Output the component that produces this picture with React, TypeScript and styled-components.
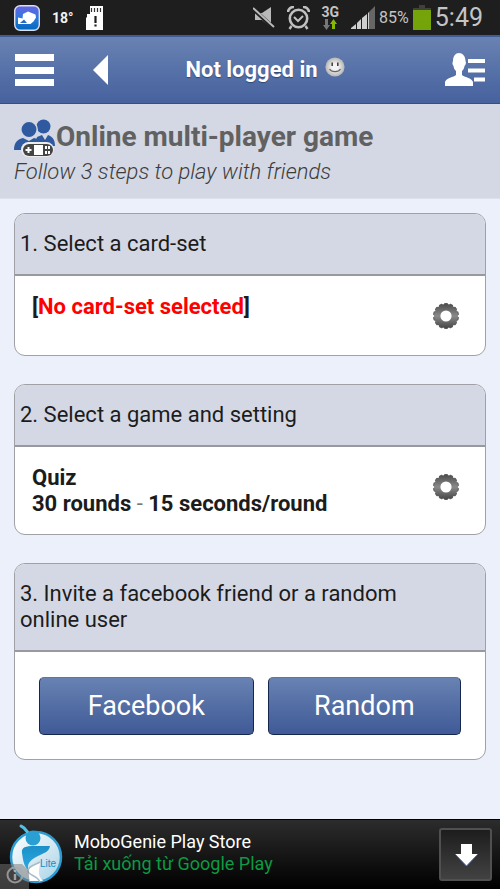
import React from "react";
import styled, { createGlobalStyle } from "styled-components";

const GlobalStyle = createGlobalStyle`
  * { box-sizing: border-box; }
  body {
    margin: 0;
    background: #ebf0fa;
    color: #1c1c1c;
    font-family: Roboto, "Noto Sans", sans-serif;
  }
  h1, h2, p { margin: 0; }
  button { font-family: inherit; cursor: pointer; }
  svg { display: block; flex: none; }
`;

const Page = styled.div`
  display: flex;
  flex-direction: column;
  min-height: 100vh;
`;

const StatusBar = styled.div`
  display: flex;
  align-items: center;
  justify-content: space-between;
  height: 35px;
  padding: 0 17px 0 14px;
  background: #1e1e1e;
  color: #c4c4c4;
`;

const StatusGroup = styled.div<{ $gap: number }>`
  display: flex;
  align-items: center;
  gap: ${(p) => p.$gap}px;
`;

const Temperature = styled.span`
  color: #f2f2f2;
  font: bold 14px/24px "Liberation Sans Narrow", Roboto, sans-serif;
`;

const Percent = styled.span`
  font-size: 16px;
  line-height: 24px;
`;

const Clock = styled.span`
  font-size: 25px;
  line-height: 34px;
`;

const Network = styled.span`
  display: flex;
  flex-direction: column;
  align-items: center;
  font-size: 14px;
  font-weight: bold;
  line-height: 14px;
`;

const Header = styled.header`
  display: grid;
  grid-template-columns: 76px 34px 1fr 80px;
  align-items: center;
  height: 69px;
  padding: 0 15px;
  border-top: 2px solid #405c96;
  border-bottom: 1px solid #304f8b;
  background: linear-gradient(#6882b3, #46619d);
`;

const IconButton = styled.button`
  display: flex;
  align-items: center;
  padding: 0;
  border: 0;
  background: none;
`;

const AccountButton = styled(IconButton)`
  justify-self: end;
`;

const Account = styled.div`
  display: flex;
  align-items: center;
  justify-content: center;
  gap: 7px;
  color: #fff;
  font-size: 22px;
  font-weight: bold;
  line-height: 28px;
  white-space: nowrap;
  text-shadow: 0 1px 1px #2e4878;
`;

const Raised = styled.span`
  padding-bottom: 6px;
`;

const TitleStrip = styled.section`
  padding: 15px 14px 11px;
  border-bottom: 1px solid #dde1ec;
  background: #d4d8e4;
  color: #616161;
`;

const TitleRow = styled.div`
  display: flex;
  align-items: center;
`;

const Title = styled.h1`
  font-size: 28px;
  line-height: 36px;
  padding-bottom: 2px;
`;

const Subtitle = styled.p`
  font-size: 22px;
  font-style: italic;
  font-weight: 300;
  line-height: 30px;
  color: #3c3c3c;
`;

const Steps = styled.main`
  display: flex;
  flex-direction: column;
  gap: 28px;
  padding: 14px 14px 28px;
`;

const Card = styled.section`
  overflow: hidden;
  border: 1px solid #a0a1a5;
  border-radius: 11px;
  background: #fff;
`;

const CardHeading = styled.h2`
  padding: 17px 32px 17px 5px;
  border-bottom: 2px solid #98999e;
  background: #d4d8e4;
  font-size: 22px;
  font-weight: 400;
  line-height: 26px;
`;

const CardBody = styled.div`
  display: flex;
  justify-content: space-between;
  min-height: 79px;
  padding: 18px 25px 17px 17px;
  font-size: 22px;
  line-height: 26px;
`;

const Warning = styled.span`
  color: #f00;
`;

const Dash = styled.span`
  font-weight: 400;
  color: #777;
`;

const SettingsButton = styled(IconButton)`
  align-self: flex-start;
  padding-top: 8px;
`;

const Actions = styled.div`
  display: flex;
  gap: 14px;
  padding: 25px 24px 24px;
`;

const ActionButton = styled.button<{ $grow: number }>`
  flex: ${(p) => p.$grow} 1 0;
  min-width: 0;
  height: 58px;
  padding: 0;
  border: 1px solid #15264f;
  border-top-color: #6d7480;
  border-radius: 5px;
  background: linear-gradient(#6882b3, #3f5a97);
  color: #fff;
  font-size: 27px;
  line-height: 32px;
`;

const Ad = styled.aside`
  display: flex;
  align-items: center;
  justify-content: space-between;
  height: 70px;
  margin-top: auto;
  padding-right: 8px;
  border-top: 1px solid #000;
  background: linear-gradient(#2c2c2c, #000);
`;

const AdContent = styled.div`
  display: flex;
  align-items: center;
  gap: 6px;
`;

const AdName = styled.p`
  color: #fff;
  font-size: 18px;
  line-height: 22px;
`;

const AdLink = styled.a`
  color: #0c9a43;
  font-size: 18px;
  line-height: 22px;
  text-decoration: none;
`;

const AdText = styled.div`
  padding-bottom: 4px;
`;

const DownloadButton = styled.button`
  display: flex;
  align-items: center;
  justify-content: center;
  width: 53px;
  height: 53px;
  padding: 0;
  border: 2px solid #505050;
  border-radius: 3px;
  background: linear-gradient(#1d1d1d, #424242);
`;

const WeatherIcon = () => (
  <svg width="26" height="26" viewBox="0 0 26 26">
    <defs>
      <linearGradient id="tile" x2="0" y2="1">
        <stop stopColor="#6b62e6" />
        <stop offset=".5" stopColor="#2a79dc" />
        <stop offset="1" stopColor="#0068bd" />
      </linearGradient>
    </defs>
    <rect x=".7" y=".7" width="24.6" height="24.6" rx="5.5" fill="url(#tile)" stroke="#dcdff0" strokeWidth="1.4" />
    <path d="M9 9l5-2.500 7.500 3 .5 3-2.500 4-3 2.500H4v-6.500l4.500 1z" fill="#fff" />
    <path d="M6 18l4-3.500 3 3.500z" fill="#226fc5" />
  </svg>
);

const SdCardIcon = () => (
  <svg width="17" height="24" viewBox="0 0 17 24">
    <path d="M4 0h13v24H0V12l1-1V8h3z" fill="#fff" />
    <path d="M5.5 2v4M8.5 2v4M11.5 2v4M14.5 2v4" stroke="#333" strokeWidth="1.2" />
    <path d="M9.5 10v7M9.5 18.5v2" stroke="#1e1e1e" strokeWidth="2.2" />
  </svg>
);

const MuteIcon = () => (
  <svg width="22" height="22" viewBox="0 0 22 22">
    <path d="M2 6h7l9-6v20l-9-7H2z" fill="#b9b9b9" />
    <path d="M0 2l21 19" stroke="#1e1e1e" strokeWidth="4" />
    <path d="M0 1l21 19" stroke="#b9b9b9" strokeWidth="2" />
  </svg>
);

const AlarmIcon = () => (
  <svg width="23" height="24" viewBox="0 0 23 24" fill="none" stroke="#c0c0c0">
    <circle cx="11.5" cy="12.5" r="8.7" strokeWidth="2.6" />
    <path d="M1 6a5.500 5.500 0 0 1 6-5M22 6a5.500 5.500 0 0 0-6-5" strokeWidth="2.6" />
    <path d="M4.500 20l-2 3M18.500 20l2 3" strokeWidth="2.4" />
    <path d="M7 11l4 4 5-5" strokeWidth="2" />
  </svg>
);

const TransferIcon = () => (
  <svg width="14" height="11" viewBox="0 0 14 11">
    <path d="M2 0h3v6h2l-3.500 5L0 6h2z" fill="#777" />
    <path d="M10.500 0L14 5h-2v5H9V5H7z" fill="#86ba00" />
  </svg>
);

const SignalIcon = () => (
  <svg width="24" height="23" viewBox="0 0 24 23">
    <path d="M0 23v-1l5-4v5zM6 23v-6l4-4v10zM11 23V12l5-4v15z" fill="#cfcfcf" />
    <path d="M17 23V7l1-1v17z" fill="#cfcfcf" />
    <path d="M18 23V6l6-6v23z" fill="#666" />
  </svg>
);

const BatteryIcon = () => (
  <svg width="18" height="25" viewBox="0 0 18 25">
    <path d="M6 0h6v3h6v22H0V3h6z" fill="#3e4238" />
    <path d="M0 5h18v20H0z" fill="#74a30a" />
  </svg>
);

const MenuIcon = () => (
  <svg width="40" height="34" viewBox="0 0 40 34">
    <path d="M0 1h39v7H0zM0 14h39v7H0zM0 26h39v7H0z" fill="#fff" />
  </svg>
);

const BackIcon = () => (
  <svg width="20" height="30" viewBox="0 0 20 30">
    <path d="M17 0v30L2 15z" fill="#fff" />
  </svg>
);

const SmileIcon = () => (
  <svg width="20" height="20" viewBox="0 0 20 20">
    <defs>
      <radialGradient id="face">
        <stop offset=".3" stopColor="#f4f4f4" />
        <stop offset="1" stopColor="#b5b5b5" />
      </radialGradient>
    </defs>
    <circle cx="10" cy="10" r="9.6" fill="url(#face)" />
    <path d="M7.200 5.500v3.500M12.800 5.500v3.500" stroke="#444" strokeWidth="1.6" />
    <path d="M4.500 12c2 3.500 9 3.500 11 0" fill="none" stroke="#666" strokeWidth="1.200" />
  </svg>
);

const ContactIcon = () => (
  <svg width="40" height="34" viewBox="0 0 40 34" fill="#fff">
    <path d="M8 8c0-5 2.500-8 6-8s6.500 3 6.500 8c1 2 0 4-1 5-.5 3-1.500 4-2.500 5v4c2 2 10 3 11 7v4H0v-4c1-4 9-5 11-7v-4c-1-1-2-2-2.500-5-1-1-1.500-3-.5-5z" />
    <path d="M23 6h17v4H23zM23 15.500h17v4H23zM29 24.500h11v4H29z" />
  </svg>
);

const PlayersIcon = () => (
  <svg width="42" height="38" viewBox="0 0 42 38">
    <circle cx="29.500" cy="7.500" r="7" fill="#2f5a9f" />
    <path d="M23 18l5-2 3 5 3-5c5 2 7 5 7 11H20z" fill="#2f5a9f" />
    <circle cx="15" cy="10.500" r="8.200" fill="#2f5a9f" stroke="#d4d8e4" strokeWidth="1.500" />
    <path d="M0 31c0-8 4-11 9-12l6 3 5-3c4 1 6 2 8 5l-8 7z" fill="#2f5a9f" />
    <rect x="7" y="23" width="33" height="15" rx="7.500" fill="#ececec" />
    <rect x="9" y="25" width="30" height="12" rx="6" fill="#444" />
    <path d="M20 26h9v10h-9z" fill="#fff" />
    <path d="M14.500 28v6M11.500 31h6" stroke="#fff" strokeWidth="2" />
    <path d="M31 27h2v3h-2zM34 27h2v3h-2zM31 32h2v3h-2zM34 32h2v3h-2z" fill="#fff" />
  </svg>
);

const TEETH = Array.from({ length: 14 }, (_, i) => (i * 360) / 14);

const GearIcon = () => (
  <svg width="28" height="28" viewBox="0 0 28 28">
    <defs>
      <linearGradient id="metal" gradientUnits="userSpaceOnUse" x1="0" y1="0" x2="0" y2="28">
        <stop stopColor="#444" />
        <stop offset=".5" stopColor="#8a8a8a" />
        <stop offset="1" stopColor="#3c3c3c" />
      </linearGradient>
    </defs>
    {TEETH.map((angle) => (
      <rect key={angle} x="12" y="1" width="4" height="5" rx="1" fill="#5c5c5c" transform={`rotate(${angle} 14 14)`} />
    ))}
    <circle cx="14" cy="14" r="8.800" fill="none" stroke="url(#metal)" strokeWidth="6.400" />
  </svg>
);

const GenieIcon = () => (
  <svg width="68" height="69" viewBox="0 0 68 69">
    <defs>
      <linearGradient id="disc" x2="1" y2="1">
        <stop stopColor="#fff" />
        <stop offset=".55" stopColor="#d2e7f1" />
        <stop offset="1" stopColor="#a4d2e8" />
      </linearGradient>
      <linearGradient id="body" x2="0" y2="1">
        <stop stopColor="#1c8fc9" />
        <stop offset="1" stopColor="#2cace0" />
      </linearGradient>
    </defs>
    <circle cx="36" cy="37" r="25" fill="url(#disc)" stroke="#2d9bd0" strokeWidth="2.500" />
    <path d="M40 43c-7 1-12 4-12 9 0 4 3 7 1 9h14c-6-6-4-10-3-18z" fill="#fff" />
    <path d="M22 33c-1-6 4-7 12-7h16c-1 6-6 7-12 10-8 4-12 8-9 15-5-4-6-11-7-18z" fill="url(#body)" />
    <path d="M40 42c-5 3-12 4-12 9 0 4 10 5 12 11" fill="none" stroke="#a6bdc9" strokeWidth="1.500" />
    <path d="M21 6l3 2 6 7" fill="none" stroke="#55c0e6" strokeWidth="3" strokeLinecap="round" />
    <circle cx="33" cy="18" r="7.500" fill="#299fd3" />
    <text x="40" y="47" fill="#168bc7" fontFamily="Liberation Sans" fontSize="10">Lite</text>
    <path d="M0 44h22l7 7v18H0z" fill="#777" opacity=".5" />
    <circle cx="15" cy="55" r="7.500" fill="none" stroke="#aaa" strokeWidth="2" opacity=".8" />
    <path d="M15 50v2M15 54v6" stroke="#bbb" strokeWidth="2.400" opacity=".8" />
  </svg>
);

export default function App() {
  return (
    <Page>
      <GlobalStyle />
      <StatusBar>
        <StatusGroup $gap={12}>
          <WeatherIcon />
          <Temperature>18°</Temperature>
          <SdCardIcon />
        </StatusGroup>
        <StatusGroup $gap={12}>
          <StatusGroup $gap={12}>
            <MuteIcon />
            <AlarmIcon />
            <Network>
              3G
              <TransferIcon />
            </Network>
          </StatusGroup>
          <StatusGroup $gap={4}>
            <SignalIcon />
            <Percent>85%</Percent>
            <BatteryIcon />
            <Clock>5:49</Clock>
          </StatusGroup>
        </StatusGroup>
      </StatusBar>

      <Header>
        <IconButton type="button" aria-label="Menu">
          <MenuIcon />
        </IconButton>
        <IconButton type="button" aria-label="Back">
          <BackIcon />
        </IconButton>
        <Account>
          Not logged in
          <Raised>
            <SmileIcon />
          </Raised>
        </Account>
        <AccountButton type="button" aria-label="Account">
          <ContactIcon />
        </AccountButton>
      </Header>

      <TitleStrip>
        <TitleRow>
          <PlayersIcon />
          <Title>Online multi-player game</Title>
        </TitleRow>
        <Subtitle>Follow 3 steps to play with friends</Subtitle>
      </TitleStrip>

      <Steps>
        <Card>
          <CardHeading>1. Select a card-set</CardHeading>
          <CardBody>
            <b>
              [<Warning>No card-set selected</Warning>]
            </b>
            <SettingsButton type="button" aria-label="Choose card-set">
              <GearIcon />
            </SettingsButton>
          </CardBody>
        </Card>

        <Card>
          <CardHeading>2. Select a game and setting</CardHeading>
          <CardBody>
            <b>
              Quiz
              <br />
              30 rounds <Dash>-</Dash> 15 seconds/round
            </b>
            <SettingsButton type="button" aria-label="Change game settings">
              <GearIcon />
            </SettingsButton>
          </CardBody>
        </Card>

        <Card>
          <CardHeading>3. Invite a facebook friend or a random online user</CardHeading>
          <Actions>
            <ActionButton type="button" $grow={10}>Facebook</ActionButton>
            <ActionButton type="button" $grow={9}>Random</ActionButton>
          </Actions>
        </Card>
      </Steps>

      <Ad>
        <AdContent>
          <GenieIcon />
          <AdText>
            <AdName>MoboGenie Play Store</AdName>
            <AdLink href="#download">Tải xuống từ Google Play</AdLink>
          </AdText>
        </AdContent>
        <DownloadButton type="button" aria-label="Download">
          <svg width="24" height="24" viewBox="0 0 24 24">
            <path d="M7 1h11v10h6L12.500 23 1 11h6z" fill="#fff" />
            <path d="M1 11l11.500 12L24 11" fill="none" stroke="#4b6fd0" strokeWidth="1" />
          </svg>
        </DownloadButton>
      </Ad>
    </Page>
  );
}
